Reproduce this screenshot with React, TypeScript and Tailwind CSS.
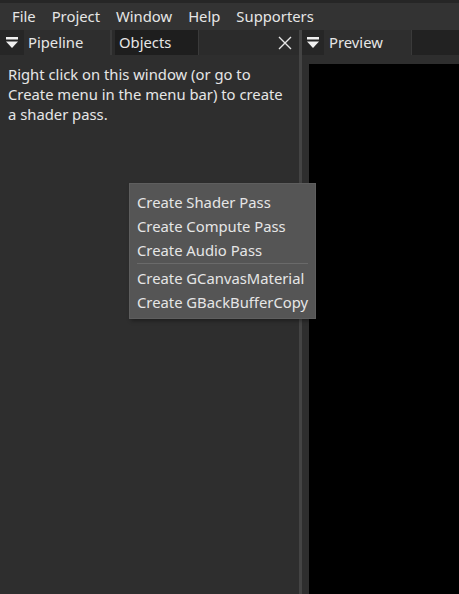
const font = { fontFamily: '"Noto Sans", "Open Sans", sans-serif' };

function DockArrow({ width = 24 }: { width?: number }) {
  return (
    <div
      className={`flex h-full items-center justify-center bg-[#262626] ${width === 24 ? "w-[24px]" : "w-[22px]"}`}
    >
      <svg width="14" height="14" viewBox="0 0 14 14">
        <rect x="1" y="1" width="12" height="2.5" fill="#f0f0f0" />
        <polygon points="1,5.5 13,5.5 7,12" fill="#f0f0f0" />
      </svg>
    </div>
  );
}

const menuItems = ["File", "Project", "Window", "Help", "Supporters"];

export default function App() {
  return (
    <div
      className="flex h-[594px] w-[459px] flex-col overflow-hidden bg-[#2e2e2e] text-[14.8px] text-[#e6e6e6]"
      style={font}
    >
      <div className="h-[3px] bg-[#262626]" />
      <div className="flex h-[27px] items-center gap-[16px] bg-[#333333] px-[12px]">
        {menuItems.map((m) => (
          <span key={m}>{m}</span>
        ))}
      </div>

      <div className="flex flex-1">
        {/* left dock */}
        <div className="relative flex w-[299px] flex-col">
          <div className="flex h-[25px] items-stretch bg-[#2b2b2b]">
            <DockArrow />
            <div className="flex w-[86px] items-center bg-[#2e2e2e] pl-[4px]">Pipeline</div>
            <div className="w-[2px] bg-[#3a3a3a]" />
            <div className="w-[3px]" />
            <div className="flex w-[83px] items-center bg-[#1e1e1e] pl-[4px]">Objects</div>
            <div className="w-[1px] bg-[#3a3a3a]" />
            <div className="flex flex-1 items-center justify-end pr-[6px]">
              <svg width="16" height="16" viewBox="0 0 16 16">
                <path d="M2 2 L14 14 M14 2 L2 14" stroke="#e6e6e6" strokeWidth="1.4" />
              </svg>
            </div>
          </div>
          <div className="px-[8px] pt-[9px] leading-[20px]">
            Right click on this window (or go to
            <br />
            Create menu in the menu bar) to create
            <br />
            a shader pass.
          </div>

          {/* context menu */}
          <div className="absolute left-[129px] top-[153px] w-[187px] whitespace-nowrap border border-[#5e5e5e] bg-[#555555] px-[7px] pb-[4px] pt-[6px] shadow-[2px_2px_4px_rgba(0,0,0,0.35)]">
            <div className="leading-[24px]">Create Shader Pass</div>
            <div className="leading-[24px]">Create Compute Pass</div>
            <div className="leading-[24px]">Create Audio Pass</div>
            <div className="mb-[2px] mt-[1px] h-[1px] bg-[#6a6a6a]" />
            <div className="leading-[24px]">Create GCanvasMaterial</div>
            <div className="leading-[24px]">Create GBackBufferCopy</div>
          </div>
        </div>

        <div className="w-[3px] bg-[#444444]" />

        {/* right dock */}
        <div className="flex flex-1 flex-col">
          <div className="flex h-[25px] items-stretch bg-[#2b2b2b]">
            <DockArrow width={22} />
            <div className="flex w-[87px] items-center bg-[#2e2e2e] pl-[5px]">Preview</div>
            <div className="w-[1px] bg-[#3a3a3a]" />
            <div className="flex-1 bg-[#222222]" />
          </div>
          <div className="flex flex-1 flex-col pl-[7px] pt-[9px]">
            <div className="flex-1 bg-black" />
          </div>
        </div>
      </div>
    </div>
  );
}
